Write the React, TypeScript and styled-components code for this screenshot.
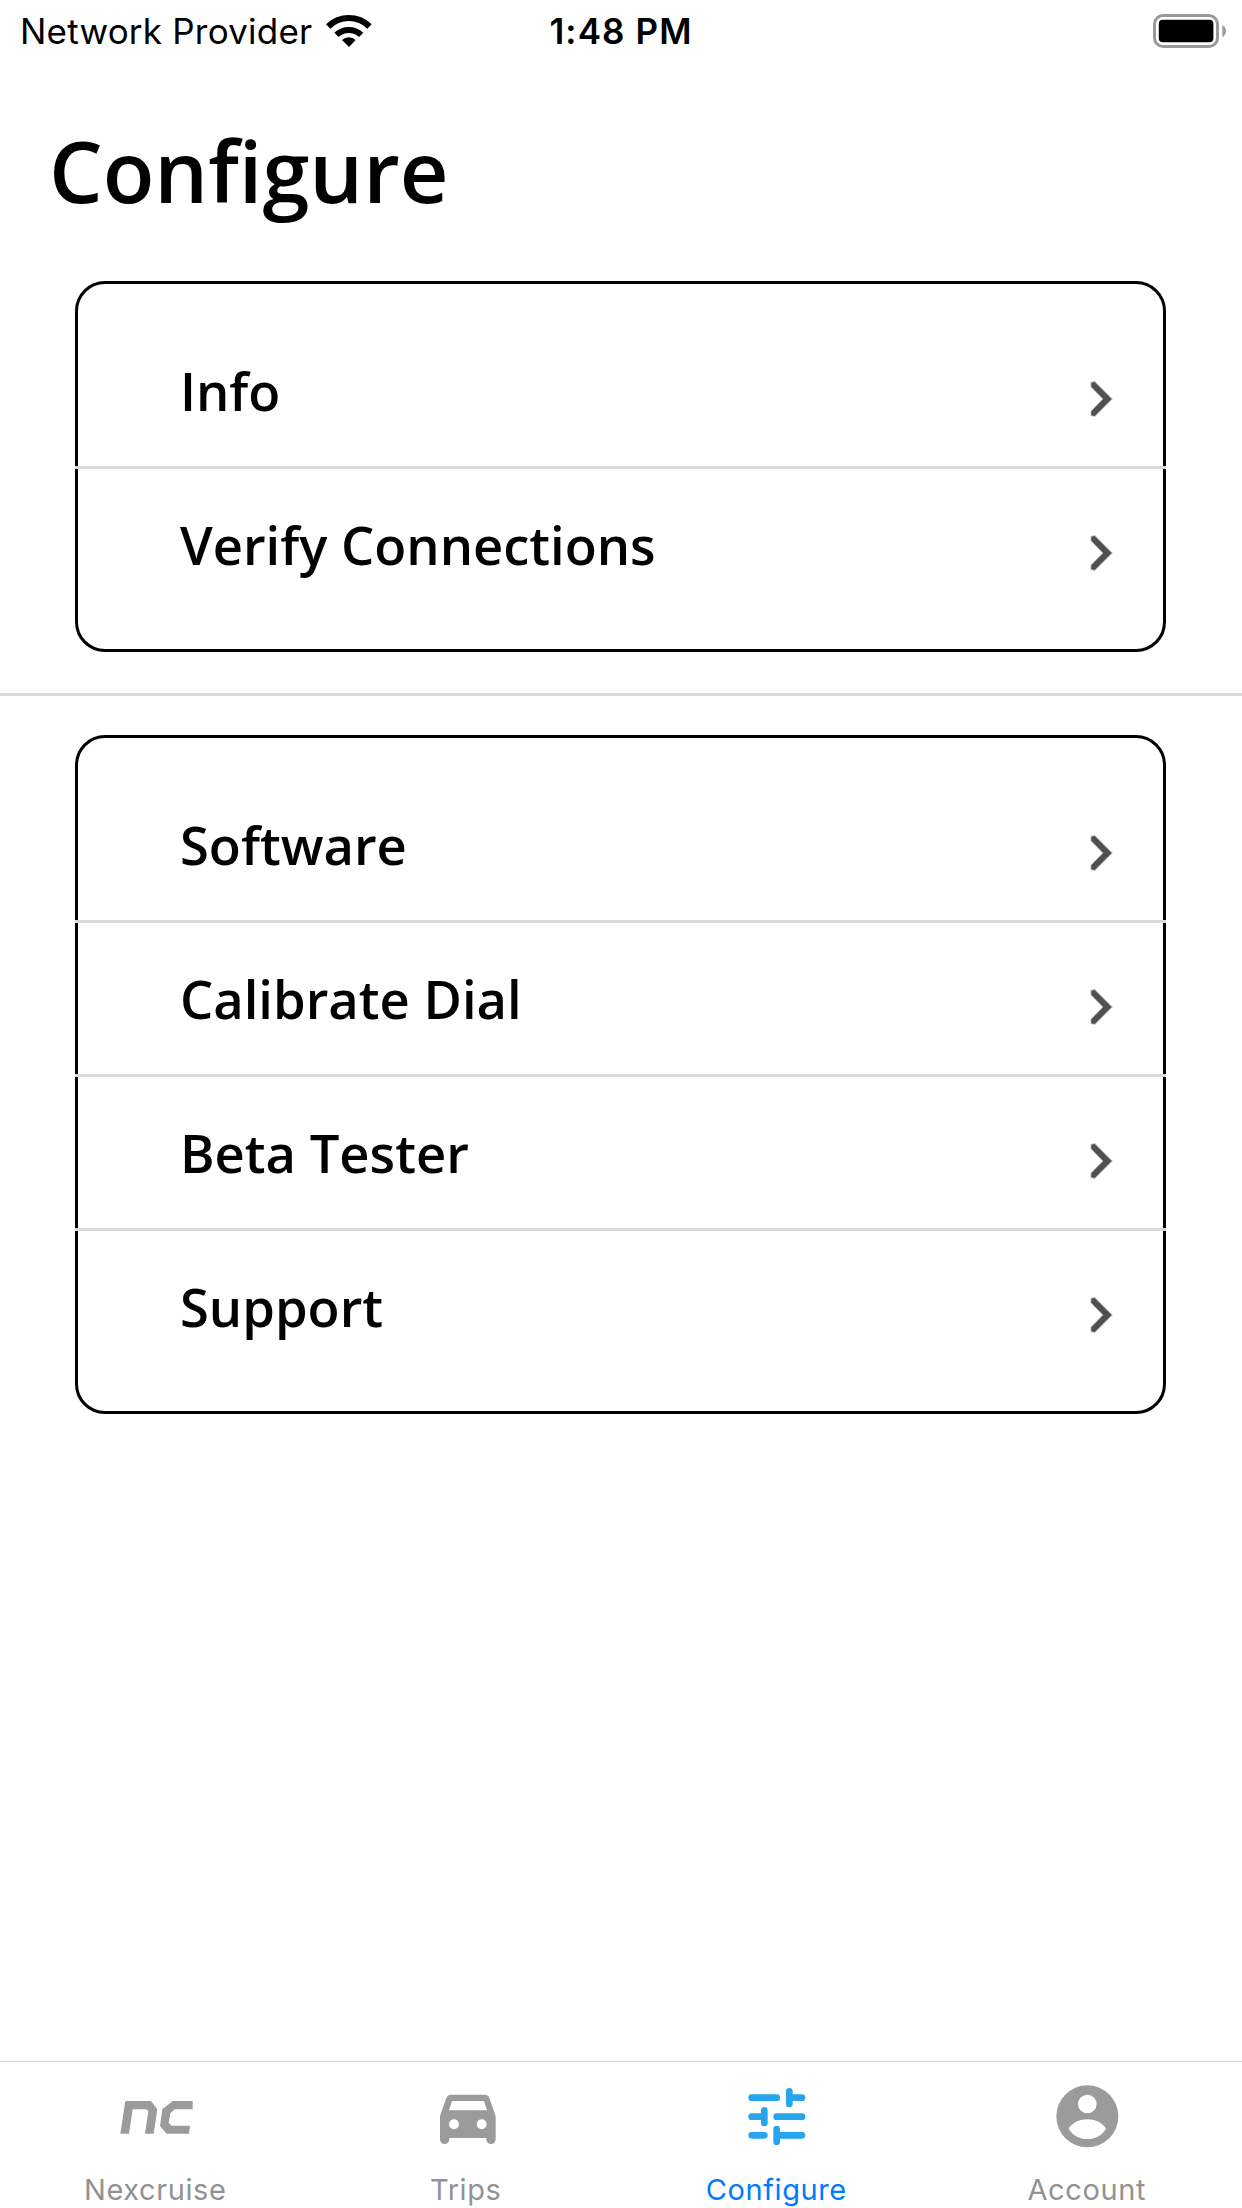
import React from "react";
import styled, { createGlobalStyle } from "styled-components";

const GlobalStyle = createGlobalStyle`
  *, *::before, *::after { box-sizing: border-box; }
  body { margin: 0; background: #fff; color: #000; }
  svg { display: block; flex: none; }
`;

const Screen = styled.div`
  display: flex;
  flex-direction: column;
  width: 1242px;
  height: 2208px;
  background: #fff;
  overflow: hidden;
`;

const StatusBar = styled.header`
  display: grid;
  grid-template-columns: 1fr auto 1fr;
  align-items: center;
  flex: none;
  height: 60px;
  padding: 0 15px 0 20px;
  font-family: Inter, "Liberation Sans", sans-serif;
  font-size: 35px;
  line-height: 62px;
`;

const Carrier = styled.div`
  display: flex;
  align-items: center;
  gap: 14px;
  letter-spacing: 0.22px;
  white-space: nowrap;
`;

const Clock = styled.time`
  margin-right: 5px;
  font-weight: 600;
  letter-spacing: 1.1px;
  white-space: nowrap;
`;

const BatterySlot = styled.div`
  display: flex;
  justify-content: flex-end;
`;

const Title = styled.h1`
  flex: none;
  height: 120px;
  margin: 50px 0 0 49px;
  font: 600 84.7px/120px "Open Sans", "Liberation Sans", sans-serif;
  font-variant-ligatures: none;
`;

const Content = styled.main`
  flex: 1;
  padding-top: 51px;
`;

const Card = styled.nav`
  width: 1091px;
  margin-left: 75px;
  padding: 31px 0 28.75px;
  border: 3px solid #000;
  border-radius: 30px;
`;

const Row = styled.a`
  display: flex;
  align-items: center;
  justify-content: space-between;
  height: 151px;
  padding: 0 49px 0 102px;
  color: #000;
  font: 600 52.5px/70px "Open Sans", "Liberation Sans", sans-serif;
  font-variant-ligatures: none;
`;

const RowDivider = styled.hr`
  height: 3px;
  margin: 0 -3px;
  border: 0;
  background: #d9d9d9;
`;

const SectionDivider = styled.hr`
  height: 3px;
  margin: 41.25px 0 39px;
  border: 0;
  background: #d9d9d9;
`;

const ChevronIcon = styled.svg`
  margin-top: 17px;
`;

const TabBar = styled.footer`
  display: grid;
  grid-template-columns: repeat(4, 1fr);
  flex: none;
  height: 147px;
  border-top: 1px solid #d6d6d6;
`;

const Tab = styled.a<{ $active?: boolean }>`
  display: flex;
  flex-direction: column;
  align-items: center;
  padding-top: 21px;
  color: ${(p) => (p.$active ? "#007aff" : "#929292")};
`;

const TabLabel = styled.span`
  margin-top: 21px;
  font: 400 29px/40px Inter, "Liberation Sans", sans-serif;
  letter-spacing: 0.6px;
`;

const Wifi = () => (
  <svg width="46" height="34" viewBox="978 38 138 102" fill="#000">
    <path d="M978 69A97 97 0 0 1 1115 69L1102 82A78 78 0 0 0 991 82Z" />
    <path d="M1003 94A64 64 0 0 1 1090 94L1077 107A45 45 0 0 0 1016 107Z" />
    <path d="M1026 116A30 30 0 0 1 1067 116L1047 137Z" />
  </svg>
);

const Battery = () => (
  <svg width="74" height="34" viewBox="0 0 74 34">
    <rect x="1.5" y="1.5" width="63" height="31" rx="8.5" fill="none" stroke="#999" strokeWidth="3" />
    <rect x="5.8" y="5.8" width="54.6" height="22.4" rx="4" fill="#000" />
    <path d="M69.3 11V23Q73 21 73 17T69.3 11Z" fill="#999" />
  </svg>
);

const Chevron = () => (
  <ChevronIcon width="24" height="36" viewBox="89 63 72 108">
    <path
      d="M93 68L103 66L154 117L103 168L93 166V154L129 117L93 80Z"
      fill="#505050"
      stroke="#505050"
      strokeOpacity="0.35"
      strokeWidth="5"
    />
  </ChevronIcon>
);

const NexcruiseIcon = () => (
  <svg width="74" height="66" viewBox="175 99 222 198" fill="#9b9b9b" overflow="visible">
    <path d="M182 251L197 153H274L293 178L282 251H256L266 184L260 178H219L208 251Z" />
    <path d="M399 153H339L308 178L301 228L321 251H388L391 227H336L327 218L332 190L345 178H399Z" />
  </svg>
);

const CarIcon = () => (
  <svg width="66" height="66" viewBox="99 99 198 198">
    <path
      fill="#9b9b9b"
      fillRule="evenodd"
      d="M154 134H254Q264 134 268 144L287 198V268A14 14 0 0 1 259 268V264H148V268A14 14 0 0 1 120 268V198L139 144Q143 134 154 134ZM156 153L147 181H261L252 153ZM162 207.500A15 15 0 1 0 162 237.500A15 15 0 1 0 162 207.500ZM245 207.500A15 15 0 1 0 245 237.500A15 15 0 1 0 245 207.500Z"
    />
  </svg>
);

const TuneIcon = () => (
  <svg width="66" height="66" viewBox="190 99 198 198" fill="none" stroke="#26a4ee" strokeWidth="20" strokeLinecap="round">
    <path d="M216 143H291M329 143H367M329 124V162" />
    <path d="M216 200H254M254 181V219M291 200H367" />
    <path d="M216 256H254M291 256H367M291 237V275" />
  </svg>
);

const AccountIcon = () => (
  <svg width="66" height="66" viewBox="162 99 198 198">
    <circle cx="262" cy="199" r="93" fill="#9b9b9b" />
    <circle cx="262" cy="162" r="28" fill="#fff" />
    <path d="M206 236C218 217 240 208 262 208S306 217 318 236C306 256 286 267 262 267S218 256 206 236Z" fill="#fff" />
  </svg>
);

const groups = [
  ["Info", "Verify Connections"],
  ["Software", "Calibrate Dial", "Beta Tester", "Support"],
];

const tabs = [
  { label: "Nexcruise", Icon: NexcruiseIcon },
  { label: "Trips", Icon: CarIcon },
  { label: "Configure", Icon: TuneIcon, active: true },
  { label: "Account", Icon: AccountIcon },
];

export default function App() {
  return (
    <Screen>
      <GlobalStyle />
      <StatusBar>
        <Carrier>
          Network Provider
          <Wifi />
        </Carrier>
        <Clock>1:48 PM</Clock>
        <BatterySlot>
          <Battery />
        </BatterySlot>
      </StatusBar>
      <Title>Configure</Title>
      <Content>
        {groups.map((rows, g) => (
          <React.Fragment key={g}>
            {g > 0 && <SectionDivider />}
            <Card>
              {rows.map((label, i) => (
                <React.Fragment key={label}>
                  {i > 0 && <RowDivider />}
                  <Row>
                    {label}
                    <Chevron />
                  </Row>
                </React.Fragment>
              ))}
            </Card>
          </React.Fragment>
        ))}
      </Content>
      <TabBar>
        {tabs.map(({ label, Icon, active }) => (
          <Tab key={label} $active={active}>
            <Icon />
            <TabLabel>{label}</TabLabel>
          </Tab>
        ))}
      </TabBar>
    </Screen>
  );
}
